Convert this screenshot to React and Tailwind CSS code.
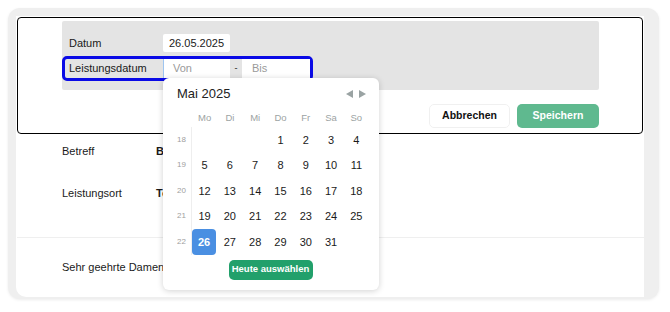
import React from 'react';

const weeks = [
  { nr: 18, days: [null, null, null, 1, 2, 3, 4] },
  { nr: 19, days: [5, 6, 7, 8, 9, 10, 11] },
  { nr: 20, days: [12, 13, 14, 15, 16, 17, 18] },
  { nr: 21, days: [19, 20, 21, 22, 23, 24, 25] },
  { nr: 22, days: [26, 27, 28, 29, 30, 31, null] },
];

const weekdays = ['Mo', 'Di', 'Mi', 'Do', 'Fr', 'Sa', 'So'];

function DatePicker() {
  return (
    <div className="absolute left-[163px] top-[78px] w-[216px] h-[212px] bg-white rounded-md shadow-[0_1px_6px_rgba(0,0,0,0.18)] pl-[9px] pr-[10px] pt-[8px]">
      {/* Header */}
      <div className="flex items-center justify-between h-[16px] pl-[5px]">
        <span className="text-[13px] text-[#222] font-medium">Mai 2025</span>
        <div className="flex items-center gap-[6px] mr-[3px]">
          <span className="w-0 h-0 border-y-[4px] border-y-transparent border-r-[7px] border-r-[#9aa3a3]"></span>
          <span className="w-0 h-0 border-y-[4px] border-y-transparent border-l-[7px] border-l-[#9aa3a3]"></span>
        </div>
      </div>

      {/* Weekday header */}
      <div className="flex mt-[6px] h-[20px] items-center">
        <div className="w-[20px]"></div>
        {weekdays.map((d) => (
          <div key={d} className="w-[25.3px] text-center text-[9.5px] text-[#9ca3a3]">{d}</div>
        ))}
      </div>

      {/* Days */}
      <div className="flex -mt-[1px]">
        <div className="w-[20px] flex flex-col">
          {weeks.map((w) => (
            <div key={w.nr} className="h-[25.5px] flex items-center justify-center text-[8px] text-[#a0a0a0]">{w.nr}</div>
          ))}
        </div>
        <div className="flex flex-col border-l border-[#eeeeee]">
          {weeks.map((w) => (
            <div key={w.nr} className="flex h-[25.5px]">
              {w.days.map((d, i) => (
                <div key={i} className="w-[25.3px] flex items-center justify-center">
                  {d === 26 ? (
                    <span className="w-[24px] h-[26px] -ml-[1px] rounded-[4px] bg-[#4a8fe2] text-white font-bold text-[11px] flex items-center justify-center">26</span>
                  ) : (
                    <span className="text-[11px] font-medium text-[#1a1a1a]">{d}</span>
                  )}
                </div>
              ))}
            </div>
          ))}
        </div>
      </div>

      <div className="flex justify-center mt-[5px]">
        <button className="w-[84px] h-[20px] rounded-[5px] bg-[#22a06b] text-white text-[9.5px] font-bold">Heute auswählen</button>
      </div>
    </div>
  );
}

export default function App() {
  return (
    <div className="relative w-[670px] h-[312px] bg-white p-2 font-['Liberation_Sans',Arial,sans-serif]">
      <div className="w-[651px] h-[291px] rounded-[12px] bg-[#efefef] shadow-[0_1px_3px_rgba(0,0,0,0.08)] flex pl-2 pt-2 pb-[2px] overflow-hidden">
        <div className="flex-1 bg-white rounded-bl-[10px] pt-[1px] pl-[1px] flex flex-col">
          {/* Edit box */}
          <div className="w-[626px] h-[117px] border-[1.5px] border-black rounded-[4px] pl-[44px] pt-[3px] flex flex-col">
            <div className="w-[537px] h-[69px] bg-[#e4e4e4] rounded-[2px] pt-[13px] text-[11px] text-[#1a1a1a]">
              <div className="flex items-center h-[18px]">
                <span className="w-[101px] pl-[7px]">Datum</span>
                <div className="w-[67px] h-[18px] bg-white rounded-[2px] flex items-center justify-center">26.05.2025</div>
              </div>
              <div className="mt-[4px] w-[251px] h-[25px] border-[3px] border-[#0a0ae6] rounded-[5px] flex items-center">
                <span className="w-[98px] pl-[4px]">Leistungsdatum</span>
                <div className="w-[67px] h-[19px] bg-white border-l border-[#9ec5f0] flex items-center pl-[9px] text-[#9a9a9a]">Von</div>
                <div className="w-[12px] h-[19px] flex items-center justify-center text-[9px]">-</div>
                <div className="flex-1 h-[19px] bg-white flex items-center pl-[10px] text-[#9a9a9a]">Bis</div>
              </div>
            </div>
            <div className="w-[537px] flex justify-end gap-[7px] mt-[14px]">
              <button className="w-[81px] h-[24px] bg-white border border-[#f0f0f0] rounded-[5px] text-[10.5px] font-bold text-[#111]">Abbrechen</button>
              <button className="w-[82px] h-[24px] bg-[#5fb98f] rounded-[5px] text-[10.5px] font-bold text-white">Speichern</button>
            </div>
          </div>

          {/* Details */}
          <div className="pl-[45px] text-[11px] text-[#1a1a1a]">
            <div className="flex items-center h-[14px] mt-[10px]">
              <span className="w-[94px]">Betreff</span>
              <span className="font-bold">B</span>
            </div>
            <div className="flex items-center h-[14px] mt-[28px]">
              <span className="w-[94px]">Leistungsort</span>
              <span className="font-bold">Te</span>
            </div>
          </div>
          <div className="mt-[37px] border-t border-[#efefef]"></div>
          <div className="pl-[45px] mt-[22px] text-[11px] text-[#1a1a1a] h-[14px] flex items-center">
            Sehr geehrte Damen und Herren,
          </div>
        </div>
        <div className="w-[15px] bg-[#efefef]"></div>
      </div>
      <DatePicker />
    </div>
  );
}
